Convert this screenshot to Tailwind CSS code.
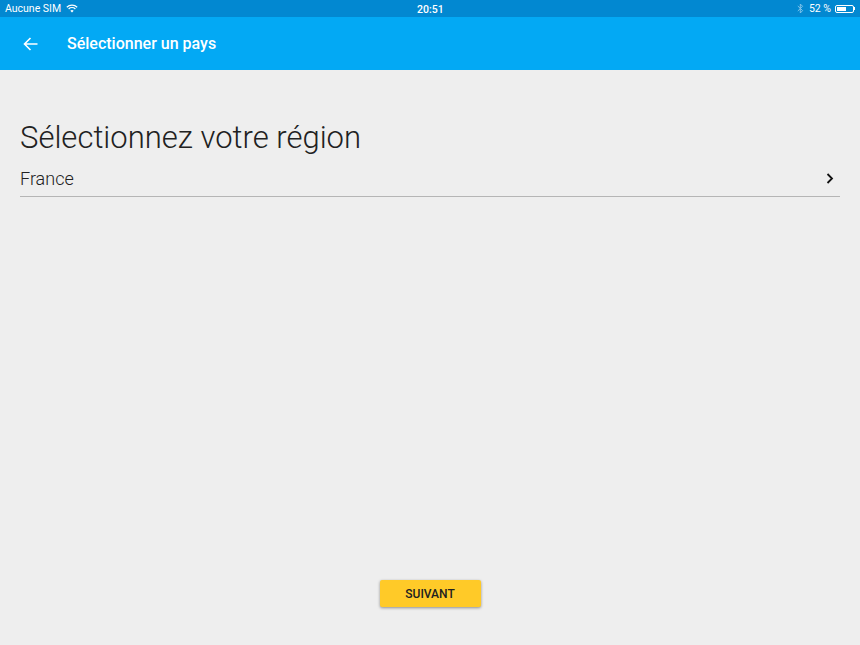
<!DOCTYPE html>
<html lang="fr">
	<head>
		<meta charset="UTF-8">
		<title>Sélectionner un pays</title>
		<script src="https://cdn.jsdelivr.net/npm/@tailwindcss/browser@4"></script>
	</head>
	<body class="bg-[#eeeeee] font-['Roboto',sans-serif]">
		<div class="h-[645px] w-[860px] flex flex-col overflow-hidden">
			<!-- Barre d'état -->
			<div class="h-[17px] bg-[#0288d1] flex items-center justify-between px-[5px] text-white text-[10.5px] relative">
				<div class="flex items-center gap-[5px]">
					<span>Aucune SIM</span>
					<svg width="12" height="9" viewBox="0 0 12 9" fill="none" stroke="white" stroke-width="1.2">
						<path d="M0.8 3.2a7.5 7.5 0 0 1 10.4 0"/>
						<path d="M2.6 5a5 5 0 0 1 6.8 0"/>
						<path d="M6 8.6 L4.3 6.7a2.5 2.5 0 0 1 3.4 0z" fill="white" stroke="none"/>
					</svg>
				</div>
				<span class="absolute left-[417px] top-[2px] font-medium">20:51</span>
				<div class="flex items-center gap-[4px]">
					<svg width="7" height="11" viewBox="0 0 7 11" fill="none" stroke="#81c4ea" stroke-width="1">
						<path d="M0.8 3 L5.6 7.6 L3.3 10 V1 L5.6 3.3 L0.8 8"/>
					</svg>
					<span class="ml-[1px]">52 %</span>
					<div class="flex items-center">
						<div class="w-[19px] h-[8px] border border-white rounded-[2px] p-[1px]">
							<div class="w-[9px] h-full bg-white"></div>
						</div>
						<div class="w-[1px] h-[3px] bg-white"></div>
					</div>
				</div>
			</div>

			<!-- Barre d'application -->
			<div class="h-[53px] bg-[#03a9f4] flex items-center text-white">
				<svg class="ml-[23px]" width="15" height="14" viewBox="0 0 15 14" fill="none" stroke="white" stroke-width="1.6">
					<path d="M14.5 7H1.5M7.5 1L1.5 7L7.5 13"/>
				</svg>
				<h2 class="ml-[29px] text-[16px] font-medium">Sélectionner un pays</h2>
			</div>

			<!-- Contenu -->
			<div class="flex-1 flex flex-col px-[20px]">
				<h1 class="mt-[49px] text-[31px] leading-[38px] font-light text-[#212121]">Sélectionnez votre région</h1>
				<div class="mt-[5px] h-[35px] flex items-center justify-between border-b border-[#b5b5b5] pb-[2px]">
					<span class="text-[18px] font-light text-[#212121]">France</span>
					<svg class="mr-[6px]" width="8" height="11" viewBox="0 0 8 11" fill="none" stroke="#111111" stroke-width="1.8">
						<path d="M1.5 1L6 5.5L1.5 10"/>
					</svg>
				</div>
				<div class="flex-1"></div>
				<button class="self-center mb-[38px] w-[101px] h-[27px] bg-[#ffca28] rounded-[2px] shadow-[0_1px_3px_rgba(0,0,0,0.4)] text-[12px] font-medium text-[#212121]">SUIVANT</button>
			</div>
		</div>
	</body>
</html>
